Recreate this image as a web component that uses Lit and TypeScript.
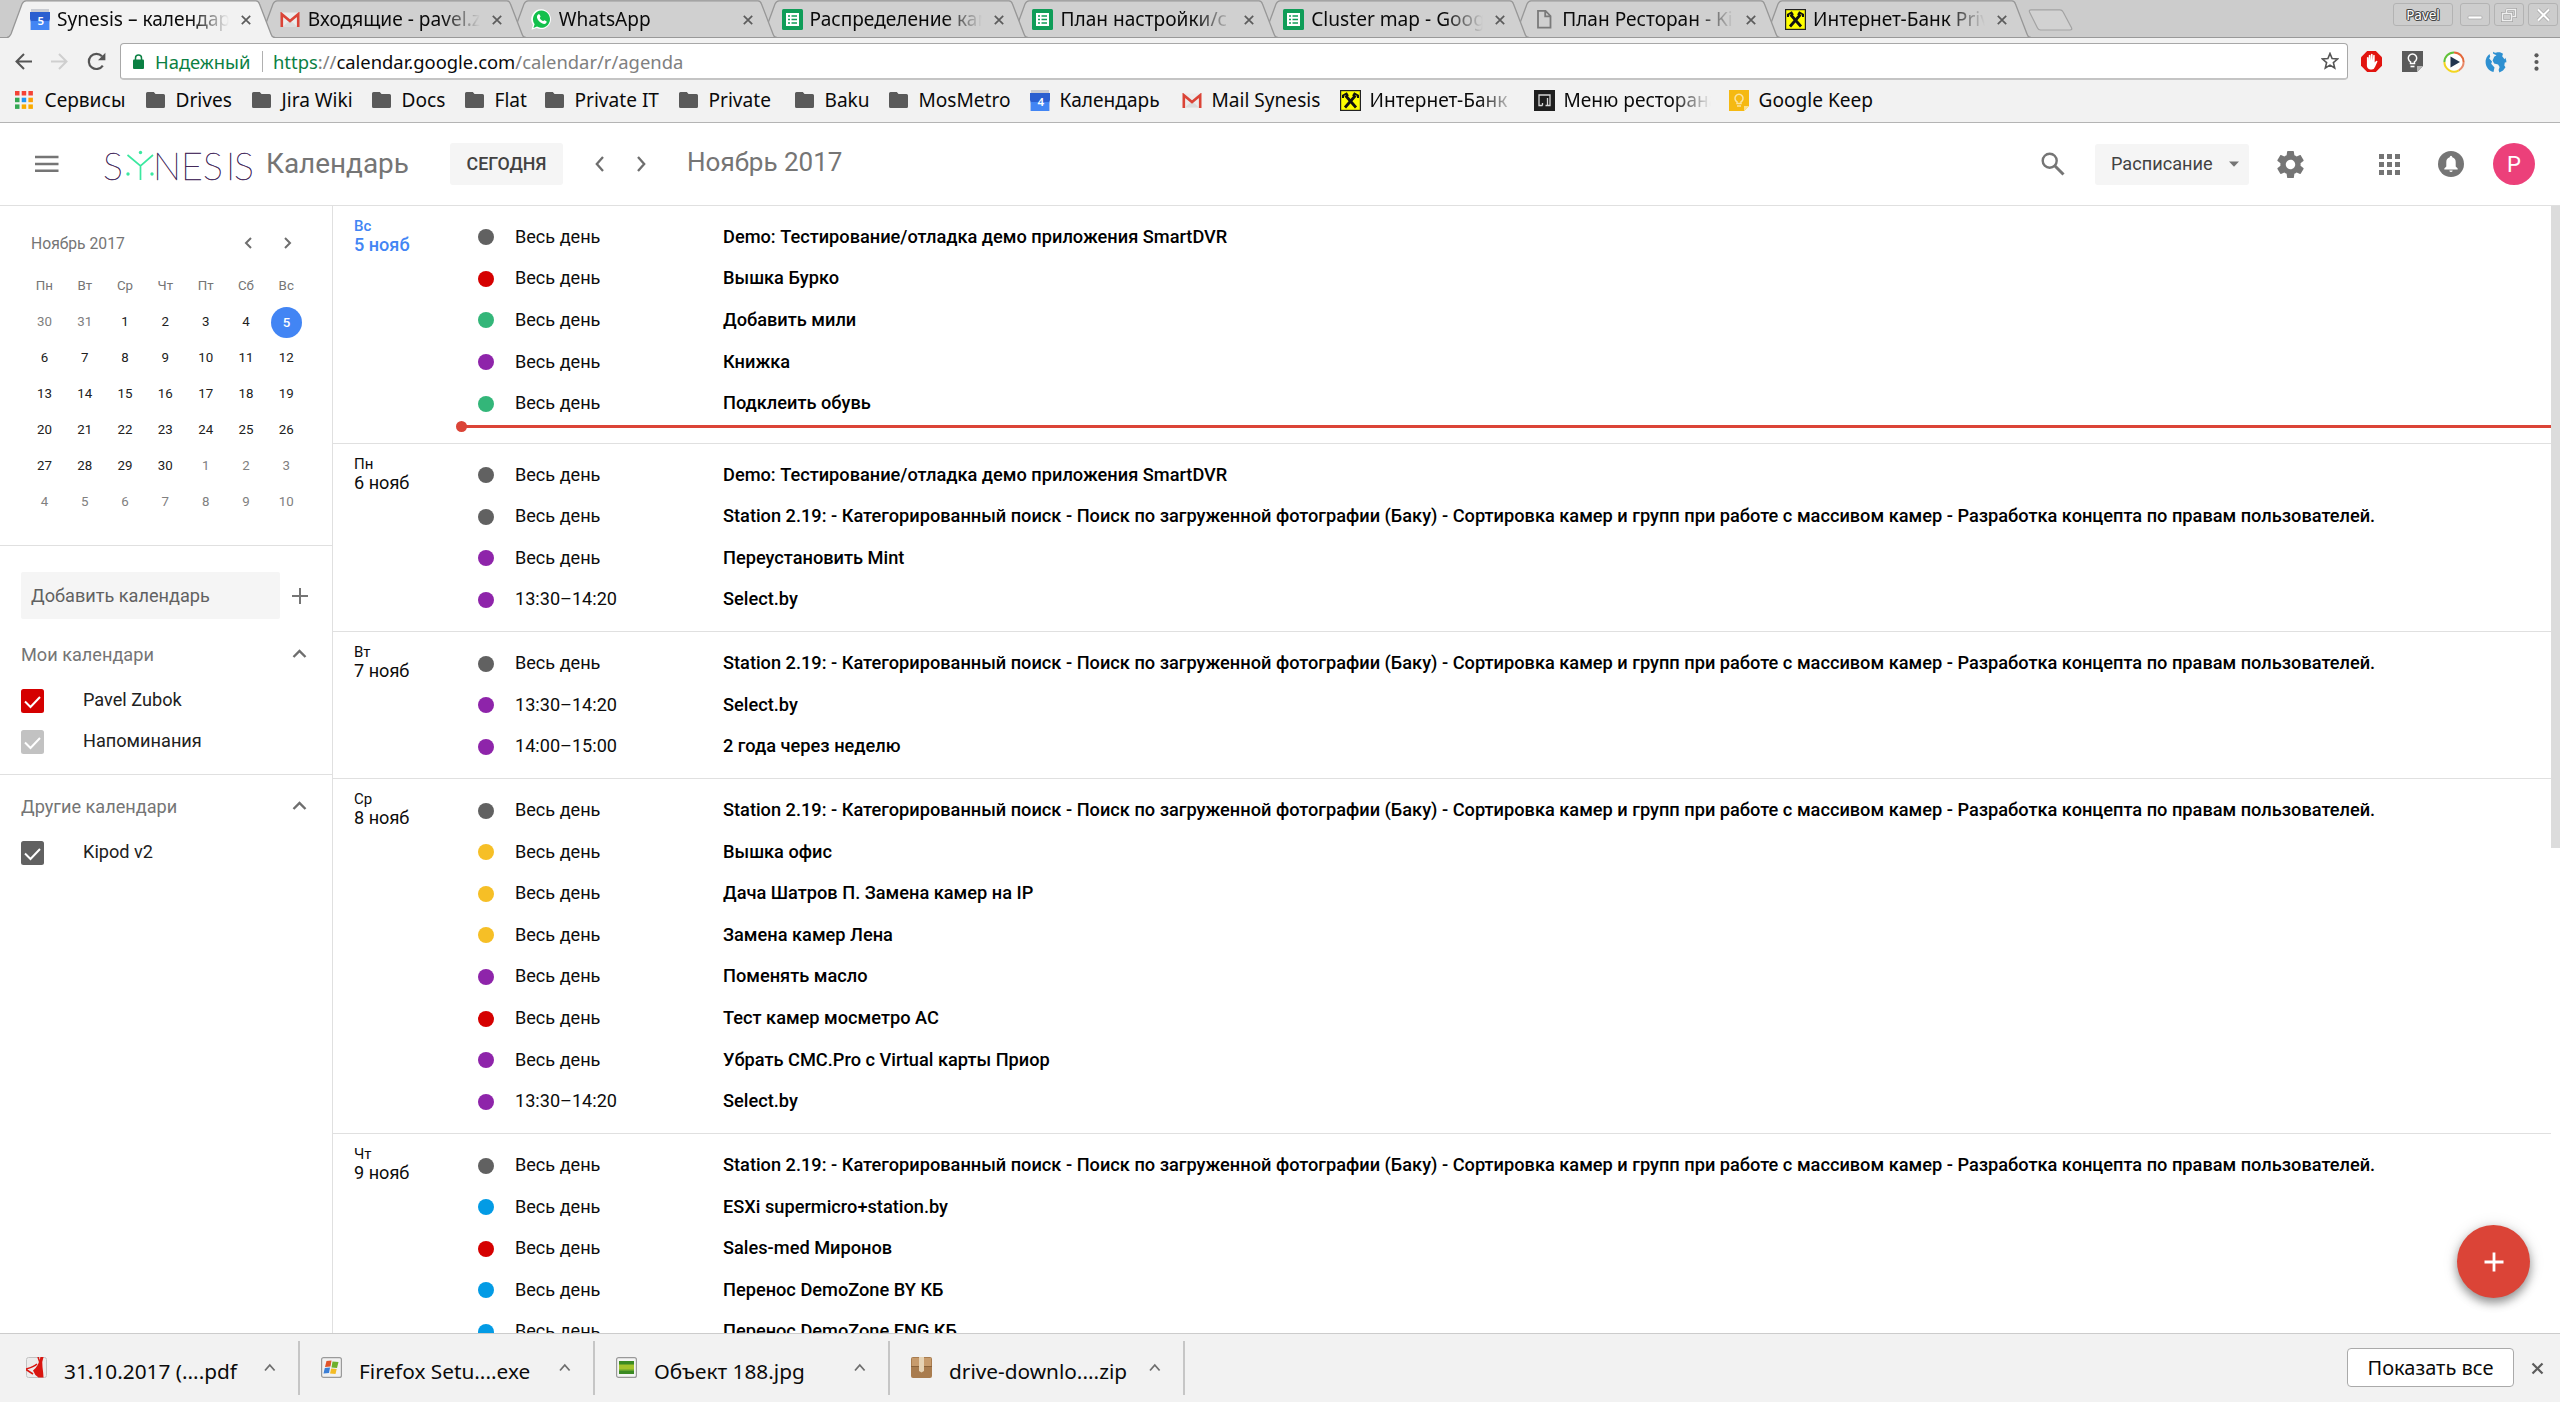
import { LitElement, html, css, svg, nothing } from "lit";
import { customElement, property } from "lit/decorators.js";

const iconCalendar = (day: string) => svg`
  <svg viewBox="0 0 20 21" width="20" height="21">
    <rect x="1" y="0" width="18" height="4" fill="#c9ccd2"/>
    <path d="M0 3h20v7l-.8 3V21H.8v-8L0 10z" fill="#2a5fd0"/>
    <path d="M.8 12h18.400V21H.8z" fill="#4285f4"/>
    <text x="10.800" y="16" text-anchor="middle" font-size="11.500" font-weight="600" fill="#fff" font-family="Noto Sans, sans-serif">${day}</text>
  </svg>`;
const iconGmail = svg`
  <svg viewBox="0 0 20 15" width="20" height="15">
    <path d="M1 .5h18v14H1z" fill="#ececec"/>
    <path d="M3 14.500 10 8l7 6.500z" fill="#dcdcdc"/>
    <path d="M1.800 15V2.200L10 9l8.200-6.800V15" fill="none" stroke="#db4437" stroke-width="2.600"/>
  </svg>`;
const iconWhatsapp = svg`
  <svg viewBox="0 0 20 21" width="21" height="21">
    <path d="M10 .3a9.900 9.900 0 1 1-4.800 18.800L0 20.800l1.500-5A9.900 9.900 0 0 1 10 .3z" fill="#fff"/>
    <path d="M10 1.600a8.600 8.600 0 1 1-4.500 16L1.900 18.900l1.200-3.700A8.600 8.600 0 0 1 10 1.600z" fill="#12c04b"/>
    <path d="M6.900 5.300c.6-.3 1.200-.2 1.400.4l.7 1.700c.1.500-.7 1.200-.7 1.600.5 1.400 1.700 2.500 3.200 3.100.4 0 1-.9 1.500-.8l1.900 1c.5.4.1 1.500-.4 2-1 .9-2.500.7-4.100 0-2.300-1-4.300-3.200-4.800-5.200-.4-1.500.2-3.200 1.300-3.800z" fill="#fff"/>
  </svg>`;
const iconSheet = svg`
  <svg viewBox="0 0 21 21" width="21" height="21">
    <rect width="21" height="21" rx="1.500" fill="#0f9d58"/>
    <rect x="4" y="4" width="13" height="13" fill="#fff"/>
    <path d="M6 7h2M9.500 7H15M6 10.500h2M9.500 10.500H15M6 14h2M9.500 14H15" stroke="#0f9d58" stroke-width="1.500"/>
  </svg>`;
const iconPage = svg`
  <svg viewBox="0 0 21 21" width="21" height="21">
    <path d="M4 1.800h7.500l5 5.200v11.600H4zM11.200 2v5.300h5" fill="none" stroke="#7a7a7a" stroke-width="1.800"/>
  </svg>`;
const iconBank = svg`
  <svg viewBox="0 0 21 21" width="21" height="21">
    <rect x=".6" y=".6" width="19.800" height="19.800" fill="#ff0" stroke="#222" stroke-width="1.200"/>
    <path d="M5 17.500 15.500 5.500M16 17.500 5.500 5.500" stroke="#111" stroke-width="2.800" fill="none"/>
    <path d="M3 8V5.500L6.500 3.500 8 6M18 8V5.500L14.500 3.500 13 6" stroke="#111" stroke-width="2" fill="none"/>
  </svg>`;
const iconMenu = svg`
  <svg viewBox="0 0 21 21" width="21" height="21">
    <rect width="21" height="21" fill="#1f1f1f"/>
    <path d="M8.500 15.500H5V5h11v10.500h-4.500M8.500 15.500V13M11.500 15.500h2V8" fill="none" stroke="#d8d8d8" stroke-width="1.300"/>
  </svg>`;
const iconKeep = svg`
  <svg viewBox="0 0 20 21" width="20" height="21">
    <path d="M0 0h20v16l-5 5H0z" fill="#f5b912"/>
    <path d="M15 21v-5h5z" fill="#fde08a"/>
    <path d="M8 13.500v-1.700a4 4 0 1 1 4 0v1.700z" fill="none" stroke="#fbe3a0" stroke-width="1.500"/>
    <path d="M8 16h4" stroke="#fbe3a0" stroke-width="1.500"/>
  </svg>`;
const iconFolder = svg`
  <svg viewBox="0 0 19 16" width="19" height="16">
    <path d="M1.500 0h6.300l1.700 2h8q1.500 0 1.500 1.500v11q0 1.500-1.500 1.500h-16Q0 16 0 14.500v-13Q0 0 1.500 0z" fill="#5a5a5a"/>
  </svg>`;
const iconApps = svg`
  <svg viewBox="0 0 18 18" width="18" height="18">
    <g fill="#f44336"><path d="M0 0h4.500v4.500H0z"/><path d="M6.700 0h4.500v4.500H6.700z"/><path d="M13.400 0h4.500v4.500h-4.500z"/></g>
    <path d="M0 6.700h4.500v4.500H0z" fill="#34a853"/><path d="M6.700 6.700h4.500v4.500H6.700z" fill="#2196f3"/><path d="M13.400 6.700h4.500v4.500h-4.500z" fill="#fb9f05"/>
    <path d="M0 13.400h4.500v4.500H0z" fill="#34a853"/><path d="M6.700 13.400h4.500v4.500H6.700z" fill="#f9ab00"/><path d="M13.400 13.400h4.500v4.500h-4.500z" fill="#f9ab00"/>
  </svg>`;

const chevron = (d: string, w: number, h: number, sw = 2) => svg`
  <svg viewBox=${`0 0 ${w} ${h}`} width=${w} height=${h}>
    <path d=${d} fill="none" stroke="#6e6e6e" stroke-width=${sw}/>
  </svg>`;

const TABS = [
  { icon: iconCalendar("5"), title: "Synesis – календарь" },
  { icon: iconGmail, title: "Входящие - pavel.zubok" },
  { icon: iconWhatsapp, title: "WhatsApp" },
  { icon: iconSheet, title: "Распределение камер" },
  { icon: iconSheet, title: "План настройки/с" },
  { icon: iconSheet, title: "Cluster map - Google" },
  { icon: iconPage, title: "План Ресторан - Kipod" },
  { icon: iconBank, title: "Интернет-Банк Priv" },
];

const BOOKMARKS = [
  { icon: iconApps, label: "Сервисы", width: 131 },
  { icon: iconFolder, label: "Drives", width: 106 },
  { icon: iconFolder, label: "Jira Wiki", width: 120 },
  { icon: iconFolder, label: "Docs", width: 93 },
  { icon: iconFolder, label: "Flat", width: 80 },
  { icon: iconFolder, label: "Private IT", width: 134 },
  { icon: iconFolder, label: "Private", width: 116 },
  { icon: iconFolder, label: "Baku", width: 94 },
  { icon: iconFolder, label: "MosMetro", width: 141 },
  { icon: iconCalendar("4"), label: "Календарь", width: 152 },
  { icon: iconGmail, label: "Mail Synesis", width: 158 },
  { icon: iconBank, label: "Интернет-Банк", width: 194, fade: true },
  { icon: iconMenu, label: "Меню ресторана", width: 195, fade: true },
  { icon: iconKeep, label: "Google Keep", width: 150 },
];

const GREY = "#616161";
const RED = "#d50000";
const GREEN = "#33b679";
const PURPLE = "#8e24aa";
const YELLOW = "#f6bf26";
const BLUE = "#039be5";
const ALL_DAY = "Весь день";
const STATION =
  "Station 2.19: - Категорированный поиск - Поиск по загруженной фотографии (Баку) - Сортировка камер и групп при работе с массивом камер - Разработка концепта по правам пользователей.";

type Entry = [color: string, time: string, title: string];
interface Day { weekday: string; date: string; today?: boolean; entries: Entry[] }

const DAYS: Day[] = [
  { weekday: "Вс", date: "5 нояб", today: true, entries: [
    [GREY, ALL_DAY, "Demo: Тестирование/отладка демо приложения SmartDVR"],
    [RED, ALL_DAY, "Вышка Бурко"],
    [GREEN, ALL_DAY, "Добавить мили"],
    [PURPLE, ALL_DAY, "Книжка"],
    [GREEN, ALL_DAY, "Подклеить обувь"],
  ] },
  { weekday: "Пн", date: "6 нояб", entries: [
    [GREY, ALL_DAY, "Demo: Тестирование/отладка демо приложения SmartDVR"],
    [GREY, ALL_DAY, STATION],
    [PURPLE, ALL_DAY, "Переустановить Mint"],
    [PURPLE, "13:30–14:20", "Select.by"],
  ] },
  { weekday: "Вт", date: "7 нояб", entries: [
    [GREY, ALL_DAY, STATION],
    [PURPLE, "13:30–14:20", "Select.by"],
    [PURPLE, "14:00–15:00", "2 года через неделю"],
  ] },
  { weekday: "Ср", date: "8 нояб", entries: [
    [GREY, ALL_DAY, STATION],
    [YELLOW, ALL_DAY, "Вышка офис"],
    [YELLOW, ALL_DAY, "Дача Шатров П. Замена камер на IP"],
    [YELLOW, ALL_DAY, "Замена камер Лена"],
    [PURPLE, ALL_DAY, "Поменять масло"],
    [RED, ALL_DAY, "Тест камер мосметро АС"],
    [PURPLE, ALL_DAY, "Убрать СМС.Pro с Virtual карты Приор"],
    [PURPLE, "13:30–14:20", "Select.by"],
  ] },
  { weekday: "Чт", date: "9 нояб", entries: [
    [GREY, ALL_DAY, STATION],
    [BLUE, ALL_DAY, "ESXi supermicro+station.by"],
    [RED, ALL_DAY, "Sales-med Миронов"],
    [BLUE, ALL_DAY, "Перенос DemoZone BY КБ"],
    [BLUE, ALL_DAY, "Перенос DemoZone ENG КБ"],
  ] },
];

@customElement("browser-chrome")
class BrowserChrome extends LitElement {
  static styles = css`
    :host { display: block; height: 123px; flex: none; box-sizing: border-box; border-bottom: 1px solid #b4b4b4; background: #f2f2f2; font-family: "Noto Sans", "Open Sans", sans-serif; font-size: 19.1px; color: #0a0a0a; }
    svg { display: block; }
    .strip { display: flex; height: 38px; background: #ccc; box-shadow: inset 0 -1px #999; padding-left: 7px; box-sizing: border-box; }
    .tab { position: relative; width: 250.860px; height: 38px; flex: none; display: flex; align-items: center; padding-left: 22px; box-sizing: border-box; }
    .shape { position: absolute; left: 0; top: 0; }
    .favicon, .title, .close { position: relative; }
    .favicon { width: 21px; display: flex; justify-content: center; margin-top: 1px; }
    .title { width: 172px; margin-left: 7px; overflow: hidden; white-space: nowrap; line-height: 30px; margin-top: -1px; }
    .fade { -webkit-mask-image: linear-gradient(90deg, #000 calc(100% - 38px), transparent 100%); mask-image: linear-gradient(90deg, #000 calc(100% - 38px), transparent 100%); }
    .close { margin-left: 12px; margin-top: 2px; }
    .newtab { margin: 9px 0 0 14px; }
    .controls { display: flex; gap: 4px; margin-left: auto; padding: 3px 2px 0 0; }
    .ctl { width: 30px; height: 23px; border: 1.500px solid #b3b3b3; border-radius: 3px; box-sizing: border-box; display: flex; align-items: center; justify-content: center; background: #cdcdcd; }
    .user { width: 60px; margin-right: 3px; font-size: 13.500px; color: #fff; text-shadow: 1px 0 #444, -1px 0 #444, 0 1px #444, 0 -1px #444, 1px 1px #666, -1px -1px #666; }
    .bar { display: flex; align-items: center; height: 47px; padding-left: 15px; }
    .nav { display: flex; width: 105px; align-items: center; }
    .nav svg + svg { margin-left: 19px; }
    .url { display: flex; align-items: center; width: 2228px; height: 37px; font-size: 18.400px; border: 1px solid #a8a8a8; border-bottom-color: #c4c4c4; border-bottom-width: 2px; border-radius: 4px; background: #fff; box-sizing: border-box; padding: 0 8px 0 12px; white-space: nowrap; }
    .safe { color: #0b8043; margin-left: 11px; width: 95px; }
    .sep { width: 1px; height: 21px; background: #b0b0b0; margin: 0 10px 0 12px; }
    .address { color: #808080; flex: 1; }
    .https { color: #0b8043; }
    .host { color: #0a0a0a; }
    .ext { display: flex; gap: 20px; margin-left: 13px; }
    .kebab { margin-left: 27px; }
    .marks { display: flex; height: 32px; align-items: center; padding-left: 15px; white-space: nowrap; margin-top: -1px; }
    .mark { display: flex; align-items: center; flex: none; height: 32px; }
    .mark .pic { width: 20px; margin-right: 9.500px; flex: none; }
    .mark .clip { width: 147px; overflow: hidden; }
  `;

  render() {
    return html`
      <div class="strip">
        ${TABS.map((t, i) => html`
          <div class="tab" style=${`z-index:${20 - i}`}>
            <svg class="shape" width="270" height="38" viewBox="0 0 270 38">
              <path d="M0 38 C2 37.500 3 36 4 34 L15 4 Q16.500 1 19 1 H249 Q251.500 1 252.500 4 L264 34 Q265 37.500 268 38z" fill=${i ? "#d0d0d0" : "#f2f2f2"}/>
              <path d="M0 37.500 C2 37.500 3 36 4 34 L15 4 Q16.500 .8 19 .8 H249 Q251.500 .8 252.500 4 L264 34 Q265 37.500 268 37.500" fill="none" stroke="#979797" stroke-width="1.300"/>
              ${i ? svg`<path d="M0 37.500H268" stroke="#999"/>` : nothing}
            </svg>
            <span class="favicon">${t.icon}</span>
            <span class="title fade">${t.title}</span>
            <svg class="close" width="10" height="10" viewBox="0 0 10 10"><path d="M.8.8 9.200 9.200M9.200.8.8 9.200" stroke="#5c5c5c" stroke-width="1.700"/></svg>
          </div>`)}
        <svg class="newtab" width="46" height="22" viewBox="0 0 46 22">
          <path d="M3 .8h29q2 0 3 2l8.500 16q1 2.200-1.500 2.200H12.500q-2 0-3-2L1.500 3Q.8.8 3 .8z" fill="#d2d2d2" stroke="#a3a3a3" stroke-width="1.200"/>
        </svg>
        <div class="controls">
          <div class="ctl user">Pavel</div>
          <div class="ctl"><svg width="16" height="16" viewBox="0 0 16 16"><rect x="1" y="9" width="14" height="3" rx="1" fill="#fff" stroke="#aaa" stroke-width=".8"/></svg></div>
          <div class="ctl"><svg width="16" height="14" viewBox="0 0 16 14"><g fill="none"><path d="M5.500 1.500h9v7h-3M1.500 5.500h9v7h-9zM5.500 5V1.500" stroke="#a5a5a5" stroke-width="3"/><path d="M5.500 1.500h9v7h-3M1.500 5.500h9v7h-9zM5.500 5V1.500" stroke="#eee" stroke-width="1.500"/></g></svg></div>
          <div class="ctl"><svg width="15" height="14" viewBox="0 0 15 14"><path d="M2 1.500 13 12.500M13 1.500 2 12.500" stroke="#aaa" stroke-width="3.600"/><path d="M2 1.500 13 12.500M13 1.500 2 12.500" stroke="#fff" stroke-width="2"/></svg></div>
        </div>
      </div>
      <div class="bar">
        <div class="nav">
          <svg width="17" height="17" viewBox="0 0 17 17"><path d="M17 8.500H2M9 1 1.500 8.500 9 16" fill="none" stroke="#555" stroke-width="2"/></svg>
          <svg width="17" height="17" viewBox="0 0 17 17"><path d="M0 8.500h15M8 1l7.500 7.500L8 16" fill="none" stroke="#cfcfcf" stroke-width="2"/></svg>
          <svg width="19" height="19" viewBox="0 0 19 19"><path d="M15.800 13.600A7.600 7.600 0 1 1 15 4.200" fill="none" stroke="#555" stroke-width="2.200"/><path d="M18.400.8v7.400H11z" fill="#555"/></svg>
        </div>
        <div class="url">
          <svg width="11" height="15" viewBox="0 0 11 15"><rect y="5.500" width="11" height="9.500" rx="1" fill="#0b8043"/><path d="M2.500 6V4a3 3 0 0 1 6 0v2" fill="none" stroke="#0b8043" stroke-width="1.500"/></svg>
          <span class="safe">Надежный</span><span class="sep"></span>
          <span class="address"><span class="https">https</span>://<span class="host">calendar.google.com</span>/calendar/r/agenda</span>
          <svg width="18" height="18" viewBox="0 0 18 18"><path d="m9 1.500 2.100 5.100 5.500.4-4.200 3.600 1.300 5.400L9 13.100 4.300 16l1.300-5.400L1.400 7l5.500-.4z" fill="none" stroke="#555" stroke-width="1.600"/></svg>
        </div>
        <div class="ext">
          <svg width="21" height="21" viewBox="0 0 21 21"><path d="M6.200 0h8.600L21 6.200v8.600L14.800 21H6.200L0 14.800V6.200z" fill="#e2140f"/><path d="M9.200 18.500c-2.200-.2-3-1.800-3.300-3.500V6.500q.8-1 1.600 0V10l.3-5.800q.8-1 1.600 0l.2 5.300.3-6.300q.9-1 1.700 0l.2 6.300.4-5.300q.8-1 1.500.1v7.200l1.300-1.600q1.100-.4 1.500.6l-2.400 5.200q-1 2.800-3.300 2.800z" fill="#fff"/></svg>
          <svg width="21" height="21" viewBox="0 0 21 21"><path d="M0 0h21v15l-6 6H0z" fill="#5b5b5b"/><path d="M15 21v-6h6z" fill="#b5b5b5"/><path d="M8.500 12.500v-1.700a4.200 4.200 0 1 1 4 0v1.700z" fill="none" stroke="#fff" stroke-width="1.500"/><path d="M8.500 15.500h4" stroke="#fff" stroke-width="1.600"/></svg>
          <svg width="22" height="22" viewBox="0 0 22 22"><circle cx="11" cy="11" r="9" fill="#fff"/><g fill="none" stroke-width="2"><path d="M1.400 11A9.600 9.600 0 0 1 11 1.400" stroke="#62c13a"/><path d="M11 1.400a9.600 9.600 0 0 1 9.600 9.600" stroke="#e4683a"/><path d="M20.600 11a9.600 9.600 0 0 1-4.800 8.300" stroke="#e98a6a"/><path d="M15.800 19.300A9.600 9.600 0 0 1 1.400 11" stroke="#f3d51f"/></g><path d="M7.500 5.500 17 11l-9.500 5.500z" fill="#22354f"/></svg>
          <svg width="22" height="22" viewBox="0 0 22 22"><path d="M8 .8c1.500.8 2.300 1.200 3.500.7 2.500-.8 5-.2 6.500 1.300l-.8 2.400 2.300 3 .8-1.500q1.100 2 1.100 4.500l-1.600.4-.5 3 1.200 1.600-2.500 3.200-3.600 2-.8-2.400 1-3-1.500-2.600-4-1-1.500-3 1.600-3.600 2.300-1.500-3.300-1.500z" fill="#2e90d1"/><path d="m4.500 3 .7 2.500-1 2L7 10.500l-.8 2.300 3.300 3.700-1 4.500C4 20 .6 16 .6 11q0-5 3.900-8z" fill="#2e90d1"/></svg>
        </div>
        <svg class="kebab" width="5" height="18" viewBox="0 0 5 18"><g fill="#5a5a5a"><circle cx="2.500" cy="2.300" r="2.100"/><circle cx="2.500" cy="9" r="2.100"/><circle cx="2.500" cy="15.700" r="2.100"/></g></svg>
      </div>
      <div class="marks">
        ${BOOKMARKS.map((b) => html`
          <div class="mark" style=${`width:${b.width}px`}>
            <span class="pic">${b.icon}</span><span class=${b.fade ? "clip fade" : ""}>${b.label}</span>
          </div>`)}
      </div>`;
  }
}

@customElement("mini-month")
class MiniMonth extends LitElement {
  static styles = css`
    :host { display: block; height: 340px; box-sizing: border-box; border-bottom: 1px solid #e0e0e0; padding-top: 27px; }
    svg { display: block; }
    .head { display: flex; align-items: center; height: 20px; padding: 0 40px 0 31px; color: #757575; font-size: 15.700px; }
    .head span { flex: 1; }
    .head svg + svg { margin-left: 32px; }
    .grid { display: grid; grid-template-columns: repeat(7, 40.300px); grid-auto-rows: 36px; padding: 15px 0 0 24.300px; font-size: 13.300px; text-align: center; line-height: 36px; color: #212121; }
    .dim { color: #808080; }
    .name { color: #757575; }
    .today { width: 31px; height: 31px; line-height: 31px; border-radius: 50%; background: #4285f4; color: #fff; margin: 3px 0 0 5px; font-weight: 500; }
  `;

  render() {
    const names = ["Пн", "Вт", "Ср", "Чт", "Пт", "Сб", "Вс"];
    const cells = Array.from({ length: 42 }, (_, i) => {
      const n = i - 1;
      if (n < 1) return { text: 31 + n, cls: "dim" };
      if (n > 30) return { text: n - 30, cls: "dim" };
      return { text: n, cls: n === 5 ? "today" : "" };
    });
    return html`
      <div class="head"><span>Ноябрь 2017</span>${chevron("M7 1 2 6l5 5", 8, 12)}${chevron("M1 1l5 5-5 5", 8, 12)}</div>
      <div class="grid">
        ${names.map((n) => html`<div class="name">${n}</div>`)}
        ${cells.map((c) => html`<div class=${c.cls}>${c.text}</div>`)}
      </div>`;
  }
}

@customElement("agenda-day")
class AgendaDay extends LitElement {
  @property({ attribute: false }) day!: Day;
  static styles = css`
    :host { display: flex; position: relative; border-bottom: 1px solid #e0e0e0; padding: 10px 0 11.200px 21px; font-size: 18.100px; color: #0c0c0c; }
    :host([today]) { padding-bottom: 18.800px; }
    .date { width: 124px; padding-top: 1px; line-height: 20px; flex: none; }
    .weekday { font-size: 15px; line-height: 18px; }
    .blue { color: #4285f4; font-weight: 500; }
    .rows { flex: 1; min-width: 0; }
    .row { display: flex; align-items: center; height: 41.600px; white-space: nowrap; line-height: 22px; }
    .dot { width: 16px; height: 16px; border-radius: 50%; margin-top: 1px; }
    .time { width: 208px; margin-left: 21px; }
    .title { font-weight: 500; color: #000; font-size: 18.220px; }
    .now { position: absolute; left: 128px; right: 0; bottom: 15px; height: 3px; background: #db4437; }
    .now::before { content: ""; position: absolute; left: -5px; top: -4px; width: 11px; height: 11px; border-radius: 50%; background: #db4437; }
  `;

  render() {
    const d = this.day;
    return html`
      <div class=${d.today ? "date blue" : "date"}>
        <div class="weekday">${d.weekday}</div>
        <div>${d.date}</div>
      </div>
      <div class="rows">
        ${d.entries.map(([color, time, title]) => html`
          <div class="row">
            <span class="dot" style=${`background:${color}`}></span>
            <span class="time">${time}</span>
            <span class="title">${title}</span>
          </div>`)}
      </div>
      ${d.today ? html`<div class="now"></div>` : nothing}`;
  }
}

const check = (color: string) => svg`
  <svg width="23" height="24" viewBox="0 0 23 24">
    <rect width="23" height="24" rx="2.500" fill=${color}/>
    <path d="M4 12.500 9.500 18 19 8" fill="none" stroke="#fff" stroke-width="2"/>
  </svg>`;

const fileIcons = [
  svg`<svg width="21" height="21" viewBox="0 0 21 21"><rect x=".5" y=".5" width="20" height="20" rx="2" fill="#ececec" stroke="#c2c2c2"/><path d="M14.500 0h3q-2 5-1 10 .8 6 1 10.500h-5Q8.500 18 7 13.500q5.500-4 7.500-13.500z" fill="#d9150f"/><path d="M0 12q8-2 11-5M0 12.500l7 4.500M12 0l3 9" stroke="#d9150f" stroke-width="1.500" fill="none"/></svg>`,
  svg`<svg width="21" height="21" viewBox="0 0 21 21"><rect x=".6" y=".6" width="19.800" height="19.800" rx="2" fill="#f1f1f1" stroke="#9a9a9a" stroke-width="1.200"/><path d="m5.500 4 5-.5-1 6-5.500.5z" fill="#e2542a"/><path d="m11.500 4.500 6 .5-1.500 6-5.500-.5z" fill="#6fb02c"/><path d="m3.800 11 5.200-.5-1 5.500-5.500.5z" fill="#3c7fd6"/><path d="m10.200 11.500 5.500.5-1.200 5-5.500-.5z" fill="#f3bb24"/></svg>`,
  svg`<svg width="21" height="21" viewBox="0 0 21 21"><rect x=".6" y=".6" width="19.800" height="19.800" rx="2" fill="#f5f5f5" stroke="#999" stroke-width="1.200"/><path d="M3 4h15v13H3z" fill="#3b8a22"/><path d="M3 7.500h15v6H3z" fill="#a3c32c"/><path d="M3 12.500h15V14H3z" fill="#62a32a"/></svg>`,
  svg`<svg width="21" height="21" viewBox="0 0 21 21"><rect width="21" height="21" rx="2" fill="#a97c4e"/><path d="M1 1h19v8H1z" fill="#c79b6c"/><path d="M8 0h5v14l-2.500 1.500L8 14z" fill="#e6d3b5"/><path d="M0 9.500h8M13 9.500h8" stroke="#8b6239"/></svg>`,
];
const FILES = ["31.10.2017 (....pdf", "Firefox Setu....exe", "Объект 188.jpg", "drive-downlo....zip"];

@customElement("app-root")
class AppRoot extends LitElement {
  static styles = css`
    :host { display: flex; flex-direction: column; width: 2560px; height: 1402px; overflow: hidden; background: #fff; font-family: Roboto, "Liberation Sans", sans-serif; position: relative; }
    svg { display: block; flex: none; }
    .header { display: flex; align-items: center; height: 83px; flex: none; box-sizing: border-box; border-bottom: 1px solid #e0e0e0; padding: 0 25px 0 35px; color: #757575; }
    .logo { margin-left: 44px; margin-top: 4px; }
    .logo text { font-family: Lato, sans-serif; font-weight: 100; font-size: 37.500px; fill: #43285a; stroke: #43285a; stroke-width: .5px; }
    .product { font-size: 27.900px; width: 184px; margin-left: 8px; line-height: 40px; }
    .btn { background: #f5f5f5; border-radius: 3px; height: 42px; display: flex; align-items: center; justify-content: center; color: #424242; box-sizing: border-box; padding-bottom: 2px; }
    .now-btn { width: 113px; font-weight: 500; font-size: 17.800px; }
    .prev { margin-left: 32px; }
    .next { margin-left: 33px; }
    .period { margin-left: 41px; font-size: 26px; flex: 1; margin-top: -5px; }
    .view { width: 154px; height: 41px; font-size: 18.150px; margin-left: 30px; justify-content: space-between; padding: 0 10px 1px 16px; }
    .gear { margin-left: 28px; }
    .grid9 { margin-left: 75px; }
    .bell { margin-left: 38px; }
    .avatar { width: 42px; height: 42px; border-radius: 50%; background: #ec407a; color: #fff; font-size: 22px; display: flex; align-items: center; justify-content: center; margin-left: 29px; }
    .body { display: flex; height: 1127px; flex: none; overflow: hidden; }
    .side { width: 333px; flex: none; box-sizing: border-box; border-right: 1px solid #e0e0e0; font-size: 18.150px; color: #212121; }
    .add { display: flex; align-items: center; padding: 26px 24px 0 21px; justify-content: space-between; }
    .field { width: 259px; height: 47px; line-height: 47px; background: #f5f5f5; color: #616161; padding-left: 10px; box-sizing: border-box; border-radius: 2px; }
    .group { display: flex; align-items: center; justify-content: space-between; padding: 0 25px 0 21px; height: 24px; color: #757575; }
    .mine { margin-top: 23px; }
    .others { margin-top: 19px; }
    .cal { display: flex; align-items: center; height: 41.500px; padding-left: 21px; }
    .cal span { margin: -3px 0 0 39px; }
    .c1 { margin-top: 14px; }
    .rule { height: 1px; background: #e0e0e0; margin-top: 11px; }
    .c2 { margin-top: 14px; }
    .agenda { flex: 1; min-width: 0; }
    .scroll { width: 9px; height: 642px; background: #dcdcdc; flex: none; }
    .fab { position: absolute; left: 2457px; top: 1225px; width: 73px; height: 73px; border-radius: 50%; background: #db4437; box-shadow: 0 5px 10px rgba(0,0,0,.38), 0 1px 16px rgba(0,0,0,.13); display: flex; align-items: center; justify-content: center; }
    .shelf { display: flex; align-items: center; flex: 1; box-sizing: border-box; border-top: 1px solid #ccc; background: #f2f2f2; padding: 0 16px 0 5px; font-family: "Noto Sans", "Open Sans", sans-serif; font-size: 20.800px; color: #0a0a0a; }
    .file { width: 295px; height: 54px; flex: none; box-sizing: border-box; border-right: 2px solid #c6c6c6; display: flex; align-items: center; padding: 0 22px 0 21px; white-space: nowrap; }
    .file span { flex: 1; margin-left: 17px; padding-top: 5px; }
    .file svg { margin-top: -2px; }
    .all { width: 167px; height: 39px; font-size: 20px; border: 1px solid #aaa; border-radius: 4px; background: #fff; box-sizing: border-box; margin-left: auto; display: flex; align-items: center; justify-content: center; margin-right: 17px; margin-top: -1px; padding-bottom: 1px; }
  `;

  render() {
    return html`
      <browser-chrome></browser-chrome>
      <div class="header">
        <svg width="24" height="18" viewBox="0 0 24 18"><path d="M0 2h23.500M0 9h23.500M0 15.700h23.500" stroke="#757575" stroke-width="2.500"/></svg>
        <svg class="logo" width="155" height="32" viewBox="0 0 155 32">
          <text x="0 50 78 100 123 131" y="29.500">SNESIS</text>
          <path d="M24.500 5 37.500 16 50 5M37.500 16V30" fill="none" stroke="#3be8a0" stroke-width="1.700"/>
          <g fill="#3be8a0"><circle cx="37.500" cy="2.500" r="1.700"/><circle cx="25" cy="24" r="1.700"/><circle cx="49" cy="24" r="1.700"/></g>
        </svg>
        <div class="product">Календарь</div>
        <div class="btn now-btn">СЕГОДНЯ</div>
        <div class="prev">${chevron("M8 1 1.800 8 8 15", 9, 16, 2.3)}</div>
        <div class="next">${chevron("M1 1l6.200 7L1 15", 9, 16, 2.3)}</div>
        <div class="period">Ноябрь 2017</div>
        <svg width="24" height="24" viewBox="0 0 24 24"><circle cx="8.700" cy="8.700" r="7" fill="none" stroke="#757575" stroke-width="2.400"/><path d="m14 14 8.500 8.500" stroke="#757575" stroke-width="3"/></svg>
        <div class="btn view"><span>Расписание</span><svg width="10" height="6" viewBox="0 0 10 6"><path d="M0 .5h10L5 5.800z" fill="#757575"/></svg></div>
        <svg class="gear" width="27" height="27" viewBox="2 2 20 20"><path fill="#757575" d="M19.430 12.980c.04-.32.07-.64.07-.98s-.03-.66-.07-.98l2.110-1.650c.19-.15.24-.42.12-.64l-2-3.460c-.12-.22-.39-.3-.61-.22l-2.490 1c-.52-.4-1.080-.73-1.690-.98l-.38-2.650C14.460 2.180 14.250 2 14 2h-4c-.25 0-.46.18-.49.42l-.38 2.650c-.61.25-1.170.59-1.690.98l-2.490-1c-.23-.09-.49 0-.61.22l-2 3.460c-.13.22-.07.49.12.64l2.110 1.650c-.04.32-.07.65-.07.98s.03.66.07.98l-2.110 1.650c-.19.15-.24.42-.12.64l2 3.460c.12.22.39.3.61.22l2.490-1c.52.4 1.080.73 1.690.98l.38 2.650c.03.24.24.42.49.42h4c.25 0 .46-.18.49-.42l.38-2.650c.61-.25 1.170-.59 1.690-.98l2.490 1c.23.09.49 0 .61-.22l2-3.460c.12-.22.07-.49-.12-.64zM12 15.500c-1.930 0-3.500-1.570-3.500-3.500s1.570-3.500 3.500-3.500 3.500 1.570 3.500 3.500-1.570 3.500-3.500 3.500z"/></svg>
        <svg class="grid9" width="21" height="21" viewBox="0 0 21 21"><path d="M0 2.500h21M0 10.500h21M0 18.500h21" stroke="#757575" stroke-width="5" stroke-dasharray="5 3"/></svg>
        <svg class="bell" width="26" height="26" viewBox="0 0 26 26"><circle cx="13" cy="13" r="13" fill="#757575"/><path d="M13 4.800q1.300 0 1.300 1.500 3.400 1 3.400 4.700v4.500l2 2v1H6.300v-1l2-2V11q0-3.700 3.400-4.700 0-1.500 1.300-1.500zM11.300 19.500h3.400q-.3 1.600-1.700 1.600t-1.700-1.600z" fill="#fff"/></svg>
        <div class="avatar">P</div>
      </div>
      <div class="body">
        <div class="side">
          <mini-month></mini-month>
          <div class="add"><div class="field">Добавить календарь</div><svg width="16" height="16" viewBox="0 0 16 16"><path d="M8 0v16M0 8h16" stroke="#757575" stroke-width="2"/></svg></div>
          <div class="group mine"><span>Мои календари</span>${chevron("M1.500 8 7.500 2l6 6", 15, 10, 2.4)}</div>
          <div class="cal c1">${check("#d50000")}<span>Pavel Zubok</span></div>
          <div class="cal">${check("#c2c2c2")}<span>Напоминания</span></div>
          <div class="rule"></div>
          <div class="group others"><span>Другие календари</span>${chevron("M1.500 8 7.500 2l6 6", 15, 10, 2.4)}</div>
          <div class="cal c2">${check("#616161")}<span>Kipod v2</span></div>
        </div>
        <div class="agenda">
          ${DAYS.map((d) => html`<agenda-day .day=${d} ?today=${!!d.today}></agenda-day>`)}
        </div>
        <div class="scroll"></div>
      </div>
      <div class="shelf">
        ${FILES.map((f, i) => html`<div class="file">${fileIcons[i]}<span>${f}</span>${chevron("M1 7.500 5.800 2l4.800 5.500", 12, 9, 1.8)}</div>`)}
        <div class="all">Показать все</div>
        <svg width="13" height="13" viewBox="0 0 13 13"><path d="m1.500 1.500 10 10M11.500 1.500l-10 10" stroke="#5c5c5c" stroke-width="2.200"/></svg>
      </div>
      <div class="fab"><svg width="20" height="20" viewBox="0 0 20 20"><path d="M10 .5v19M.5 10h19" stroke="#fff" stroke-width="2.800"/></svg></div>`;
  }
}
